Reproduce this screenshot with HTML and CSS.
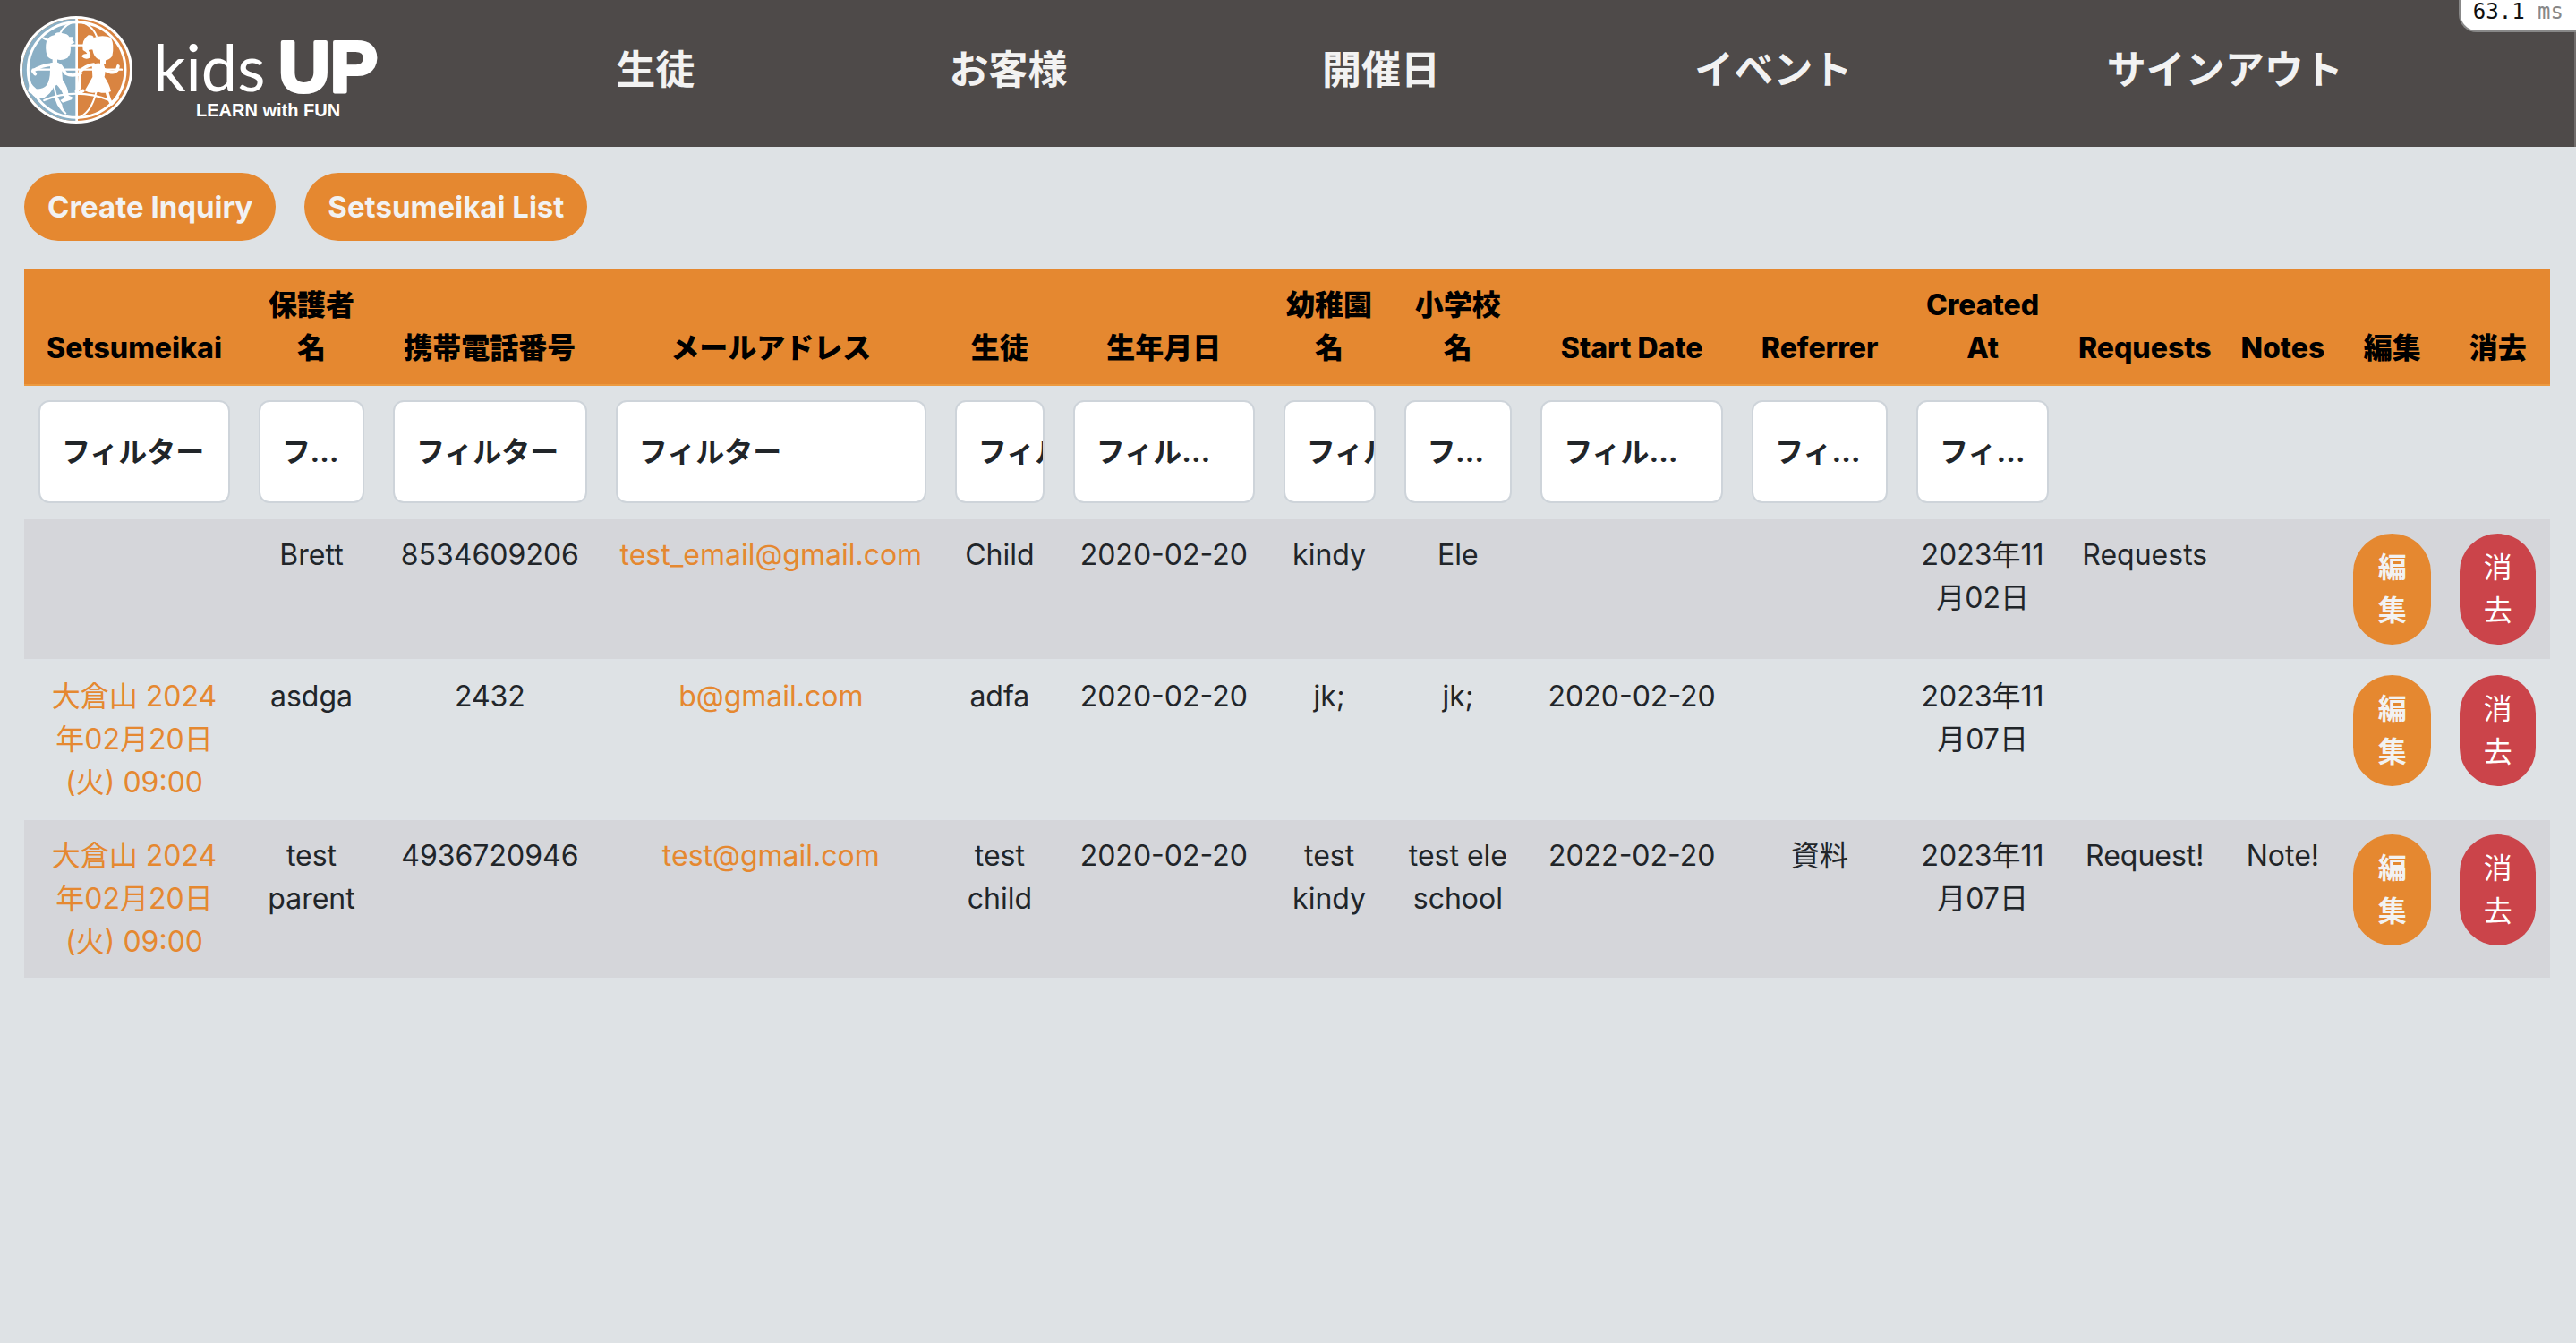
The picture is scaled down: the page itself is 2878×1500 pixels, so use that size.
FILE: index.html
```html
<!DOCTYPE html>
<html lang="ja">
<head>
<meta charset="utf-8">
<title>Kids UP</title>
<link rel="stylesheet" href="styles.css">
</head>
<body>
<header class="site-header">
  <a class="logo" href="#" aria-label="Kids UP LEARN with FUN">
    <svg class="logo-art" viewBox="0 0 410 128" width="410" height="128">
      <defs>
        <clipPath id="left"><rect x="0" y="0" width="64" height="128"/></clipPath>
      </defs>
      <ellipse cx="63" cy="64" rx="63" ry="60" fill="#fff"/>
      <ellipse cx="63" cy="64" rx="60" ry="57" fill="#d98441"/>
      <ellipse cx="63" cy="64" rx="60" ry="57" fill="#8aafc5" clip-path="url(#left)"/>
      <g transform="translate(-12 -4) scale(.3333)" fill="none" stroke="#fff" stroke-linecap="round" stroke-linejoin="round">
        <ellipse cx="227" cy="204" rx="163" ry="160" stroke-width="9"/>
        <path d="M227 34V374" stroke-width="8"/>
        <path d="M227 40Q186 50 170 84M227 40Q278 50 294 92M150 250Q160 320 190 350M292 280Q276 350 227 368" stroke-width="6"/>
        <path d="M116 98L132 106M200 122H262M80 203H378M118 306Q227 262 336 306" stroke-width="7"/>
        <g fill="#fff" stroke="none">
          <path d="M126 108Q134 90 152 88Q158 74 180 82Q198 84 202 94L216 94 212 104 220 112 206 120Q210 152 196 164Q176 176 158 168Q140 172 128 158Q120 132 126 108Z"/>
          <path d="M146 164H162V184H146ZM138 182Q156 172 172 184Q182 198 178 214L180 238Q198 262 200 290L214 296 210 304 180 314 172 306 186 298Q176 268 160 254L150 262Q142 282 118 298Q90 304 76 284L64 276 70 244Q80 258 92 268Q114 270 126 256Q138 240 138 204Z"/>
          <path d="M178 320Q180 340 190 354Q176 344 162 322L150 290 164 296Z"/>
          <path d="M284 96Q314 86 342 96Q354 122 346 158Q330 180 298 168Q284 160 280 136Q278 108 284 96Z"/>
          <path d="M284 96Q282 86 266 88Q242 104 248 138Q260 144 262 150Q246 150 244 160Q256 172 270 164Q278 154 268 142Q262 136 284 136Z"/>
          <path d="M306 166H324V186H306ZM278 188Q298 176 318 186Q326 206 320 228Q336 250 342 276Q322 286 300 278Q274 286 254 274Q268 250 280 228Z"/>
        </g>
        <path d="M146 186Q110 188 80 208L88 218M174 192L190 216Q212 228 240 216M284 186Q254 190 238 210L236 264 226 276M318 202Q350 220 362 206L366 192M328 276Q336 306 344 318L364 298M248 274L234 282" stroke-width="11"/>
      </g>
      <text class="logo-kids" x="149" y="88">kids</text>
      <text class="logo-up" x="289" y="88">UP</text>
      <text class="logo-tag" x="197" y="116">LEARN with FUN</text>
    </svg>
  </a>
  <nav class="main-nav">
    <a href="#">生徒</a>
    <a href="#">お客様</a>
    <a href="#">開催日</a>
    <a href="#">イベント</a>
    <a href="#">サインアウト</a>
  </nav>
  <div class="timing">63.1 <span>ms</span></div>
</header>
<main>
  <div class="actions">
    <a class="btn" href="#">Create Inquiry</a>
    <a class="btn" href="#">Setsumeikai List</a>
  </div>
  <table class="inquiries">
    <colgroup>
      <col class="c-event"><col class="c-parent"><col class="c-phone"><col class="c-mail"><col class="c-child"><col class="c-birth"><col class="c-kindy"><col class="c-school"><col class="c-start"><col class="c-ref"><col class="c-created"><col class="c-req"><col class="c-notes"><col class="c-edit"><col class="c-del">
    </colgroup>
    <thead>
      <tr>
        <th>Setsumeikai</th><th>保護者名</th><th>携帯電話番号</th><th>メールアドレス</th><th>生徒</th><th>生年月日</th><th>幼稚園名</th><th>小学校名</th><th>Start Date</th><th>Referrer</th><th>Created At</th><th>Requests</th><th>Notes</th><th>編集</th><th>消去</th>
      </tr>
    </thead>
    <tbody>
      <tr class="filters">
        <td><div class="filter"><input id="f1" type="text"><label for="f1">フィルター</label></div></td>
        <td><div class="filter"><input id="f2" type="text"><label for="f2">フィルター</label></div></td>
        <td><div class="filter"><input id="f3" type="text"><label for="f3">フィルター</label></div></td>
        <td><div class="filter"><input id="f4" type="text"><label for="f4">フィルター</label></div></td>
        <td><div class="filter narrow"><input id="f5" type="text"><label for="f5">フィルター</label></div></td>
        <td><div class="filter"><input id="f6" type="text"><label for="f6">フィルター</label></div></td>
        <td><div class="filter narrow"><input id="f7" type="text"><label for="f7">フィルター</label></div></td>
        <td><div class="filter"><input id="f8" type="text"><label for="f8">フィルター</label></div></td>
        <td><div class="filter"><input id="f9" type="text"><label for="f9">フィルター</label></div></td>
        <td><div class="filter"><input id="f10" type="text"><label for="f10">フィルター</label></div></td>
        <td><div class="filter"><input id="f11" type="text"><label for="f11">フィルター</label></div></td>
        <td></td><td></td><td></td><td></td>
      </tr>
      <tr class="striped">
        <td></td><td>Brett</td><td>8534609206</td><td><a href="#">test_email@gmail.com</a></td><td>Child</td><td>2020-02-20</td><td>kindy</td><td>Ele</td><td></td><td></td><td>2023年11月02日</td><td>Requests</td><td></td>
        <td><a class="btn pill" href="#">編集</a></td><td><button class="btn pill danger" type="button">消去</button></td>
      </tr>
      <tr>
        <td><a href="#">大倉山 2024年02月20日 (火) 09:00</a></td><td>asdga</td><td>2432</td><td><a href="#">b@gmail.com</a></td><td>adfa</td><td>2020-02-20</td><td>jk;</td><td>jk;</td><td>2020-02-20</td><td></td><td>2023年11月07日</td><td></td><td></td>
        <td><a class="btn pill" href="#">編集</a></td><td><button class="btn pill danger" type="button">消去</button></td>
      </tr>
      <tr class="striped">
        <td><a href="#">大倉山 2024年02月20日 (火) 09:00</a></td><td>test parent</td><td>4936720946</td><td><a href="#">test@gmail.com</a></td><td>test child</td><td>2020-02-20</td><td>test kindy</td><td>test ele school</td><td>2022-02-20</td><td>資料</td><td>2023年11月07日</td><td>Request!</td><td>Note!</td>
        <td><a class="btn pill" href="#">編集</a></td><td><button class="btn pill danger" type="button">消去</button></td>
      </tr>
    </tbody>
  </table>
</main>
</body>
</html>
```
FILE: styles.css
```css
* { box-sizing: border-box; }

body {
  margin: 0;
  background: #dee2e5;
  color: #212529;
  font: 400 32px/48px Inter, "Noto Sans CJK JP", sans-serif;
}

a { color: #e58830; text-decoration: none; }

.site-header {
  position: relative;
  display: flex;
  align-items: center;
  height: 164px;
  padding: 0 118px 8px 22px;
  background: #4e4a49;
  box-shadow: inset -2px 0 #706c6b;
}

.logo { flex: none; display: flex; }
.logo-art { display: block; }
.logo-art text { fill: #fff; }
.logo-kids { font: 400 72px Lato, sans-serif; }
.logo-up {
  font: 700 80px "Liberation Sans", sans-serif;
  stroke: #fff;
  stroke-width: 4px;
  stroke-linejoin: round;
}
.logo-tag { font: 700 20px "Liberation Sans", sans-serif; }

.main-nav {
  flex: 1;
  display: flex;
  justify-content: space-around;
  margin-left: 114px;
}
.main-nav a {
  color: #f2f2f2;
  font-size: 44px;
  font-weight: 700;
  line-height: 66px;
}

.timing {
  position: absolute;
  top: 0;
  right: 0;
  height: 36px;
  padding: 0 14px;
  border: 2px solid #888;
  border-width: 0 0 2px 2px;
  border-bottom-left-radius: 20px;
  background: #fff;
  color: #111;
  font: 24px/26px "DejaVu Sans Mono", monospace;
}
.timing span { color: #888; }

main { padding: 29px 29px 0 27px; }

.actions { display: flex; gap: 32px; margin-bottom: 32px; }
.actions .btn { font-size: 33px; }

.btn {
  display: block;
  padding: 14px 26px;
  border: 0;
  border-radius: 44px;
  background: #e58830;
  color: #f2f2f2;
  font: inherit;
  font-weight: 700;
  text-align: center;
}
.btn.pill { width: 100%; }
.btn.danger { background: #cb444a; color: #fff; font-weight: 400; }

.inquiries {
  width: 100%;
  table-layout: fixed;
  border-collapse: separate;
  border-spacing: 0;
  text-align: center;
}
.inquiries th {
  padding: 16px;
  border-bottom: 2px solid #ec9a40;
  background: #e58830;
  color: #000;
  font-weight: 800;
  vertical-align: bottom;
}
.inquiries td {
  padding: 16px;
  border-bottom: 2px solid #dee2e6;
  vertical-align: top;
}
.striped td { background: #d5d6da; }

.c-event { width: 8.72%; }
.c-parent { width: 5.31%; }
.c-phone { width: 8.82%; }
.c-mail { width: 13.43%; }
.c-child { width: 4.68%; }
.c-birth { width: 8.32%; }
.c-kindy { width: 4.78%; }
.c-school { width: 5.41%; }
.c-start { width: 8.36%; }
.c-ref { width: 6.52%; }
.c-created { width: 6.38%; }
.c-req { width: 6.46%; }
.c-notes { width: 4.46%; }
.c-edit { width: 4.22%; }
.c-del { width: 4.13%; }

.filter { position: relative; }
.filter input {
  display: block;
  width: 100%;
  height: 115px;
  border: 2px solid #ced4da;
  border-radius: 12px;
  background: #fff;
  font: inherit;
}
.filter label {
  position: absolute;
  inset: 2px;
  padding: 32px 24px;
  overflow: hidden;
  font-weight: 700;
  text-align: left;
  text-overflow: ellipsis;
  white-space: nowrap;
}
.filter.narrow label { text-overflow: clip; }
```
